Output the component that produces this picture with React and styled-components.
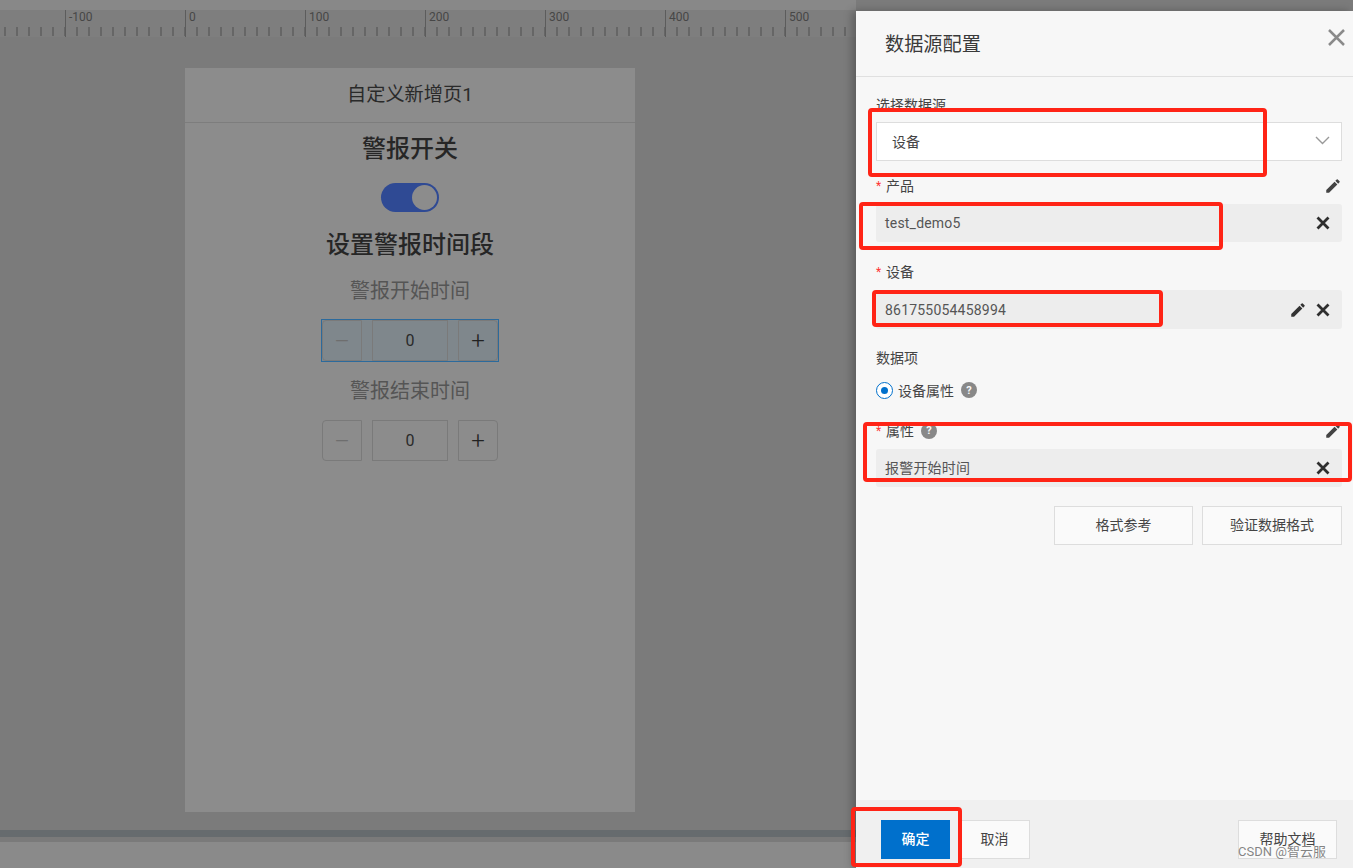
import React from "react";
import styled, { createGlobalStyle } from "styled-components";
import { MdEdit } from "react-icons/md";

const GlobalStyle = createGlobalStyle`
  html, body { margin: 0; padding: 0; height: 100%; overflow: hidden; }
  body {
    font-family: Roboto, "Liberation Sans", "Noto Sans CJK SC", sans-serif;
    font-size: 14px;
    color: #333;
  }
  * { box-sizing: border-box; }
`;

const Page = styled.div`
  position: relative;
  width: 1353px;
  height: 868px;
  display: flex;
  overflow: hidden;
  background: #7b7b7b;
`;

/* left side: dimmed editor */
const Canvas = styled.div`
  width: 856px;
  height: 868px;
  display: flex;
  flex-direction: column;
  overflow: hidden;
`;
const TopStrip = styled.div`
  height: 10px;
  background: #888;
`;
const Ruler = styled.div`
  height: 27px;
  display: flex;
  margin-left: -55px;
  background: #7e7e7e;
`;
const RulerSection = styled.div`
  flex: 0 0 120px;
  height: 27px;
  padding-left: 3px;
  border-left: 1px solid #5c5c5c;
  font-size: 12px;
  line-height: 15px;
  color: #474747;
  background-image: linear-gradient(to right, transparent 10px, #666 10px);
  background-size: 12px 9px;
  background-repeat: repeat-x;
  background-position: 0 calc(100% - 1px);
`;
const Stage = styled.div`
  flex: 1;
  padding: 31px 0 0 185px;
  background: #7b7b7b;
`;
const Phone = styled.div`
  width: 450px;
  height: 744px;
  background: #8c8c8c;
  display: flex;
  flex-direction: column;
  align-items: center;
`;
const PhoneHeader = styled.div`
  align-self: stretch;
  height: 55px;
  padding-bottom: 5px;
  border-bottom: 1px solid #7d7d7d;
  display: flex;
  align-items: center;
  justify-content: center;
  font-size: 19.2px;
  color: #2a2a2a;
`;
const Heading = styled.div`
  font-size: 24px;
  line-height: 34px;
  font-weight: 500;
  color: #262626;
  margin-top: ${(p) => p.$top}px;
`;
const SubHeading = styled.div`
  font-size: 20px;
  line-height: 28px;
  color: #555;
  margin-top: ${(p) => p.$top}px;
`;
const Toggle = styled.div`
  width: 58px;
  height: 29px;
  margin-top: 17px;
  padding: 2px;
  border-radius: 15px;
  background: #2f4a94;
  display: flex;
  justify-content: flex-end;
`;
const Knob = styled.div`
  width: 25px;
  height: 25px;
  border-radius: 50%;
  background: #8c8c8c;
`;
const Stepper = styled.div`
  width: 176px;
  height: 41px;
  margin-top: 15px;
  display: flex;
  justify-content: space-between;
  background: ${(p) => (p.$focused ? "#7f878c" : "transparent")};
  outline: ${(p) => (p.$focused ? "1px solid #2c6a9c" : "none")};
`;
const StepButton = styled.div`
  width: 40px;
  height: 41px;
  border: 1px solid #7a7a7a;
  border-radius: ${(p) => (p.$left ? "4px 0 0 4px" : "0 4px 4px 0")};
  display: flex;
  align-items: center;
  justify-content: center;
  font-size: 24px;
  font-weight: 300;
  color: ${(p) => (p.$muted ? "#6e6e6e" : "#222")};
`;
const StepValue = styled.div`
  width: 76px;
  height: 41px;
  padding-bottom: 1px;
  border: 1px solid #7a7a7a;
  display: flex;
  align-items: center;
  justify-content: center;
  font-size: 16px;
  color: #2a2a2a;
`;
const BottomBar = styled.div`
  height: 7px;
  background: #666b6e;
`;
const BottomGap = styled.div`
  height: 5px;
  background: #7a7a7a;
`;
const BottomArea = styled.div`
  height: 26px;
  background: #8a8a8a;
`;

/* right side: config drawer */
const Drawer = styled.div`
  width: 497px;
  height: 857px;
  margin-top: 11px;
  display: flex;
  flex-direction: column;
  background: #f7f7f7;
  box-shadow: -4px 0 8px rgba(0, 0, 0, 0.25);
  z-index: 1;
`;
const DrawerHeader = styled.div`
  height: 66px;
  padding: 18px 8px 0 29px;
  border-bottom: 1px solid #e0e0e0;
  display: flex;
  justify-content: space-between;
  align-items: flex-start;
`;
const DrawerTitle = styled.div`
  margin-top: 2px;
  font-size: 19.2px;
  line-height: 28px;
  color: #3a3a3a;
`;
const CloseIcon = styled.svg`
  width: 17px;
  height: 17px;
  display: block;
  stroke: #8a8a8a;
  stroke-width: 2.5;
`;
const DrawerBody = styled.div`
  flex: 1;
  padding: 18px 11px 0 20px;
  display: flex;
  flex-direction: column;
`;
const LabelRow = styled.div`
  height: 20px;
  margin-top: ${(p) => p.$top || 0}px;
  display: flex;
  align-items: center;
  justify-content: space-between;
  line-height: 20px;
  color: #444;
`;
const LabelText = styled.span`
  display: flex;
  align-items: center;
  gap: 5px;
`;
const Star = styled.span`
  width: 10px;
  margin-right: -5px;
  color: #f33;
  font-size: 12px;
`;
const HelpDot = styled.span`
  width: 16px;
  height: 16px;
  margin-left: 2px;
  border-radius: 50%;
  background: #888;
  color: #f7f7f7;
  font-size: 11px;
  font-weight: 700;
  display: flex;
  align-items: center;
  justify-content: center;
`;
const PencilSlot = styled.span`
  display: flex;
  color: #444;
  font-size: 18px;
`;
const Select = styled.div`
  height: 39px;
  margin-top: 7px;
  padding: 0 11px 2px 15px;
  background: #fff;
  border: 1px solid #ddd;
  display: flex;
  align-items: center;
  justify-content: space-between;
  color: #444;
`;
const Chevron = styled.svg`
  width: 15px;
  height: 9px;
  fill: none;
  stroke: #999;
  stroke-width: 1.4;
`;
const Field = styled.div`
  height: ${(p) => (p.$tall ? 39 : 38)}px;
  margin-top: 8px;
  padding: 0 9px;
  border-radius: 3px;
  background: #ededed;
  display: flex;
  align-items: center;
  justify-content: space-between;
  color: #555;
  letter-spacing: 0.2px;
`;
const FieldValue = styled.span`
  margin-bottom: ${(p) => (p.$cjk ? 3 : 0)}px;
`;
const FieldIcons = styled.div`
  display: flex;
  align-items: center;
  gap: 6px;
  color: #333;
  font-size: 18px;
`;
const ClearSvg = styled.svg`
  width: 20px;
  height: 20px;
  display: block;
  stroke: #2e2e2e;
  stroke-width: 2.8;
`;
const RadioRow = styled.div`
  margin-top: 12px;
  height: 20px;
  display: flex;
  align-items: center;
  color: #444;
`;
const Radio = styled.span`
  width: 17px;
  height: 17px;
  margin-right: 5px;
  border-radius: 50%;
  border: 1px solid #0070cc;
  background: #fff;
  display: flex;
  align-items: center;
  justify-content: center;
  &::after {
    content: "";
    width: 7px;
    height: 7px;
    border-radius: 50%;
    background: #0070cc;
  }
`;
const RadioHelp = styled(HelpDot)`
  margin-left: 7px;
`;
const ActionRow = styled.div`
  margin-top: 19px;
  display: flex;
  justify-content: flex-end;
  gap: 9px;
`;
const GhostButton = styled.div`
  width: ${(p) => p.$w}px;
  height: 39px;
  padding-bottom: 3px;
  background: #fafafa;
  border: 1px solid #ddd;
  display: flex;
  align-items: center;
  justify-content: center;
  color: #444;
`;
const DrawerFooter = styled.div`
  height: 68px;
  padding: 20px 16px 0 25px;
  background: #f0f0f0;
  display: flex;
  align-items: flex-start;
`;
const PrimaryButton = styled.div`
  width: 69px;
  height: 39px;
  margin-right: 9px;
  padding-bottom: 3px;
  background: #0070cc;
  color: #fff;
  font-weight: 500;
  display: flex;
  align-items: center;
  justify-content: center;
`;
const FooterSpacer = styled.div`
  flex: 1;
`;

/* things that sit on top of the screenshot */
const RedBox = styled.div`
  position: absolute;
  left: ${(p) => p.$x}px;
  top: ${(p) => p.$y}px;
  width: ${(p) => p.$w}px;
  height: ${(p) => p.$h}px;
  border: 4px solid #ff2416;
  border-radius: 4px;
  z-index: 3;
`;
const Watermark = styled.div`
  position: absolute;
  left: 1238px;
  top: 843px;
  font-size: 13px;
  line-height: 18px;
  color: rgba(110, 110, 110, 0.85);
  white-space: nowrap;
  z-index: 4;
`;

const rulerLabels = ["", "-100", "0", "100", "200", "300", "400", "500"];

function ClearIcon() {
  return (
    <ClearSvg viewBox="0 0 20 20">
      <path d="M4.5 4.5 L15.5 15.5 M15.5 4.5 L4.5 15.5" />
    </ClearSvg>
  );
}

function StepperRow({ focused }) {
  return (
    <Stepper $focused={focused}>
      <StepButton $left $muted>–</StepButton>
      <StepValue>0</StepValue>
      <StepButton>+</StepButton>
    </Stepper>
  );
}

function FieldLabel({ required, help, pencil, top, children }) {
  return (
    <LabelRow $top={top}>
      <LabelText>
        {required && <Star>*</Star>}
        {children}
        {help && <HelpDot>?</HelpDot>}
      </LabelText>
      {pencil && (
        <PencilSlot>
          <MdEdit />
        </PencilSlot>
      )}
    </LabelRow>
  );
}

export default function App() {
  return (
    <Page>
      <GlobalStyle />
      <Canvas>
        <TopStrip />
        <Ruler>
          {rulerLabels.map((label) => (
            <RulerSection key={label}>{label}</RulerSection>
          ))}
        </Ruler>
        <Stage>
          <Phone>
            <PhoneHeader>自定义新增页1</PhoneHeader>
            <Heading $top={9}>警报开关</Heading>
            <Toggle>
              <Knob />
            </Toggle>
            <Heading $top={16}>设置警报时间段</Heading>
            <SubHeading $top={15}>警报开始时间</SubHeading>
            <StepperRow focused />
            <SubHeading $top={16}>警报结束时间</SubHeading>
            <StepperRow />
          </Phone>
        </Stage>
        <BottomBar />
        <BottomGap />
        <BottomArea />
      </Canvas>

      <Drawer>
        <DrawerHeader>
          <DrawerTitle>数据源配置</DrawerTitle>
          <CloseIcon viewBox="0 0 17 17">
            <path d="M1 1 L16 16 M16 1 L1 16" />
          </CloseIcon>
        </DrawerHeader>
        <DrawerBody>
          <FieldLabel>选择数据源</FieldLabel>
          <Select>
            设备
            <Chevron viewBox="0 0 15 9">
              <path d="M1 1 L7.5 7.5 L14 1" />
            </Chevron>
          </Select>

          <FieldLabel required pencil top={15}>产品</FieldLabel>
          <Field>
            <FieldValue>test_demo5</FieldValue>
            <FieldIcons>
              <ClearIcon />
            </FieldIcons>
          </Field>

          <FieldLabel required top={20}>设备</FieldLabel>
          <Field $tall>
            <FieldValue>861755054458994</FieldValue>
            <FieldIcons>
              <MdEdit />
              <ClearIcon />
            </FieldIcons>
          </Field>

          <LabelRow $top={19}>数据项</LabelRow>
          <RadioRow>
            <Radio />
            设备属性
            <RadioHelp>?</RadioHelp>
          </RadioRow>

          <FieldLabel required help pencil top={21}>属性</FieldLabel>
          <Field>
            <FieldValue $cjk>报警开始时间</FieldValue>
            <FieldIcons>
              <ClearIcon />
            </FieldIcons>
          </Field>

          <ActionRow>
            <GhostButton $w={139}>格式参考</GhostButton>
            <GhostButton $w={140}>验证数据格式</GhostButton>
          </ActionRow>
        </DrawerBody>
        <DrawerFooter>
          <PrimaryButton>确定</PrimaryButton>
          <GhostButton $w={71}>取消</GhostButton>
          <FooterSpacer />
          <GhostButton $w={99}>帮助文档</GhostButton>
        </DrawerFooter>
      </Drawer>

      <RedBox $x={868} $y={108} $w={399} $h={69} />
      <RedBox $x={859} $y={202} $w={364} $h={48} />
      <RedBox $x={872} $y={290} $w={291} $h={37} />
      <RedBox $x={863} $y={422} $w={489} $h={60} />
      <RedBox $x={851} $y={807} $w={111} $h={60} />
      <Watermark>CSDN @智云服</Watermark>
    </Page>
  );
}
